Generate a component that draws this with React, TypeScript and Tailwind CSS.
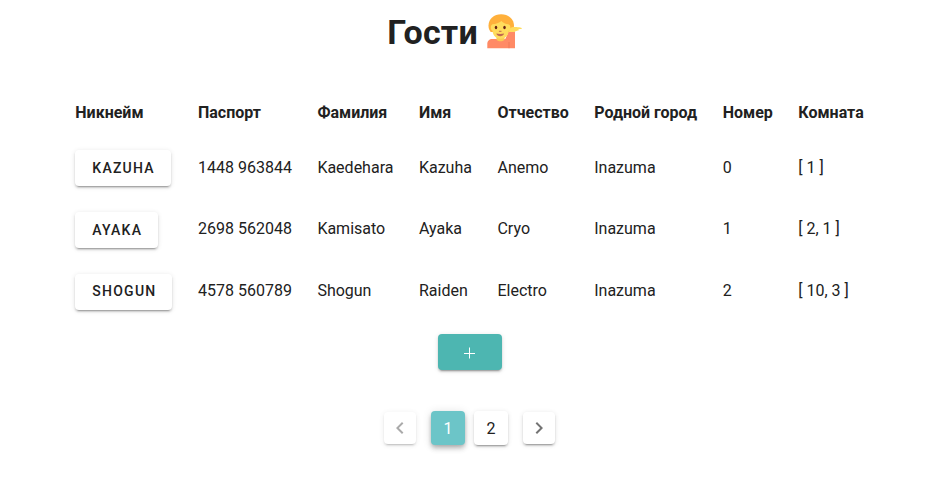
type Guest = {
  nick: string;
  passport: string;
  surname: string;
  name: string;
  patronymic: string;
  city: string;
  number: number;
  room: string;
};

const headers = ['Никнейм', 'Паспорт', 'Фамилия', 'Имя', 'Отчество', 'Родной город', 'Номер', 'Комната'];

const guests: Guest[] = [
  { nick: 'Kazuha', passport: '1448 963844', surname: 'Kaedehara', name: 'Kazuha', patronymic: 'Anemo', city: 'Inazuma', number: 0, room: '[ 1 ]' },
  { nick: 'Ayaka', passport: '2698 562048', surname: 'Kamisato', name: 'Ayaka', patronymic: 'Cryo', city: 'Inazuma', number: 1, room: '[ 2, 1 ]' },
  { nick: 'Shogun', passport: '4578 560789', surname: 'Shogun', name: 'Raiden', patronymic: 'Electro', city: 'Inazuma', number: 2, room: '[ 10, 3 ]' },
];

const raised = 'shadow-[0_3px_1px_-2px_rgba(0,0,0,0.2),0_2px_2px_0_rgba(0,0,0,0.14),0_1px_5px_0_rgba(0,0,0,0.12)]';

function TippingHand() {
  return (
    <svg viewBox="0 0 35 35" className="mt-[2px] size-[35px]" aria-hidden="true">
      <path fill="#FF8A65" d="M.3 34.300v-4.300c0-3 2-5 5-5h13l3.200-7.300h6.500v16.600z" />
      <path fill="#F9CA55" d="M9.500 22h8v3.800c-2.400 2-5.600 2-8 0z" />
      <path fill="#FFB03B" d="M14.200 .3C21.500 .3 27 5 27 11.800c0 2.500-.8 4.500-2 6.200H3.700C2.300 16.300 1.500 14.300 1.500 11.800 1.500 5 7 .3 14.200 .3z" />
      <path fill="#FFDC5D" d="M3.800 13.500c0-1.700.7-2.900 1.700-3.300 3.400-.2 6.700-1.300 8.900-3.200 1.700 2 4.200 3 6.800 3.300 1.500.4 2.200 1.500 2.200 3.200 0 1.700-.6 2.900-1.600 3.300-.4 4.900-3.700 8-8.200 8s-7.700-3.100-8.100-8c-1.100-.4-1.700-1.700-1.700-3.300z" />
      <path fill="#FF8A65" d="M22 17.700h6v5h-7.600z" />
      <path fill="#FFDC5D" d="M21.800 18l.6-2.500c.6-1.500 2-2.500 3.800-2.500 2 0 7.500.2 8.400 1 .5.600 0 1-.8 1.100l-2.800.2c1 .2 1 1-.2 1.300l-2.800.8-.3.600z" />
      <ellipse cx="9" cy="13.500" rx="1.250" ry="1.700" fill="#662113" />
      <ellipse cx="17.500" cy="13.500" rx="1.250" ry="1.700" fill="#662113" />
      <path d="M12.300 17.300h1.800" fill="none" stroke="#C1694F" strokeWidth="1" strokeLinecap="round" />
      <path fill="#C1694F" d="M9.300 19.600c2 .4 5.800.4 7.800 0-.5 1.900-2.100 2.700-3.900 2.700s-3.400-.8-3.900-2.700z" />
      <path d="M22 28v6.300" stroke="#E56B4F" strokeWidth=".6" />
    </svg>
  );
}

function Chevron({ left }: { left?: boolean }) {
  return (
    <svg viewBox="0 0 24 24" className="size-6 shrink-0" fill="currentColor" aria-hidden="true">
      {left ? (
        <path d="M15.410 16.580L10.830 12l4.580-4.590L14 6l-6 6 6 6z" />
      ) : (
        <path d="M8.590 16.580L13.170 12 8.590 7.410 10 6l6 6-6 6z" />
      )}
    </svg>
  );
}

export default function App() {
  return (
    <main className="flex h-[489px] flex-col items-center overflow-hidden bg-white pl-3 font-['Roboto',sans-serif] text-base text-[#212121]">
      <h1 className="mr-[30px] flex h-[86px] items-start gap-[9px] pt-3 text-[34px] leading-[40px] font-bold">
        <span className="tracking-[0.2px]">Гости</span>
        <TippingHand />
      </h1>

      <table className="border-separate border-spacing-x-px border-spacing-y-[2px] text-left">
        <thead>
          <tr>
            {headers.map((h) => (
              <th key={h} className="px-[12.25px] pt-[13px] pb-[11px] font-bold whitespace-nowrap">{h}</th>
            ))}
          </tr>
        </thead>
        <tbody className="[&_td]:px-[12.25px] [&_td]:whitespace-nowrap [&_tr+tr>td+td]:pb-[2px]">
          {guests.map((g) => (
            <tr key={g.nick} className="last:[&_button]:pb-[2px]">
              <td className="py-3">
                <button className={`block h-9 rounded pr-4 pl-[17px] text-sm font-medium tracking-[1.25px] uppercase ${raised}`}>{g.nick}</button>
              </td>
              <td>{g.passport}</td>
              <td>{g.surname}</td>
              <td>{g.name}</td>
              <td>{g.patronymic}</td>
              <td>{g.city}</td>
              <td>{g.number}</td>
              <td>{g.room}</td>
            </tr>
          ))}
        </tbody>
      </table>

      <button aria-label="Добавить" className={`mt-[10px] flex h-9 w-16 shrink-0 items-center justify-center rounded bg-[#4DB6B1] pt-px text-white ${raised}`}>
        <svg viewBox="0 0 12 12" className="size-3" aria-hidden="true">
          <path d="M5.500 .5v11M0 6.500h11" stroke="currentColor" strokeWidth="1" />
        </svg>
      </button>

      <nav className="mt-[41px] flex items-center">
        <button className={`flex size-8 items-center justify-center rounded text-black/55 opacity-60 ${raised}`}><Chevron left /></button>
        <button className="ml-[15px] h-[34px] w-[34px] rounded bg-[#6CC5C8] pt-px text-white shadow-[0_2px_4px_-1px_rgba(0,0,0,0.2),0_4px_5px_0_rgba(0,0,0,0.14),0_1px_10px_0_rgba(0,0,0,0.12)]">1</button>
        <button className={`ml-[9px] h-[34px] w-[34px] rounded pt-px ${raised}`}>2</button>
        <button className={`ml-[15px] flex size-8 items-center justify-center rounded text-black/55 ${raised}`}><Chevron /></button>
      </nav>
    </main>
  );
}
